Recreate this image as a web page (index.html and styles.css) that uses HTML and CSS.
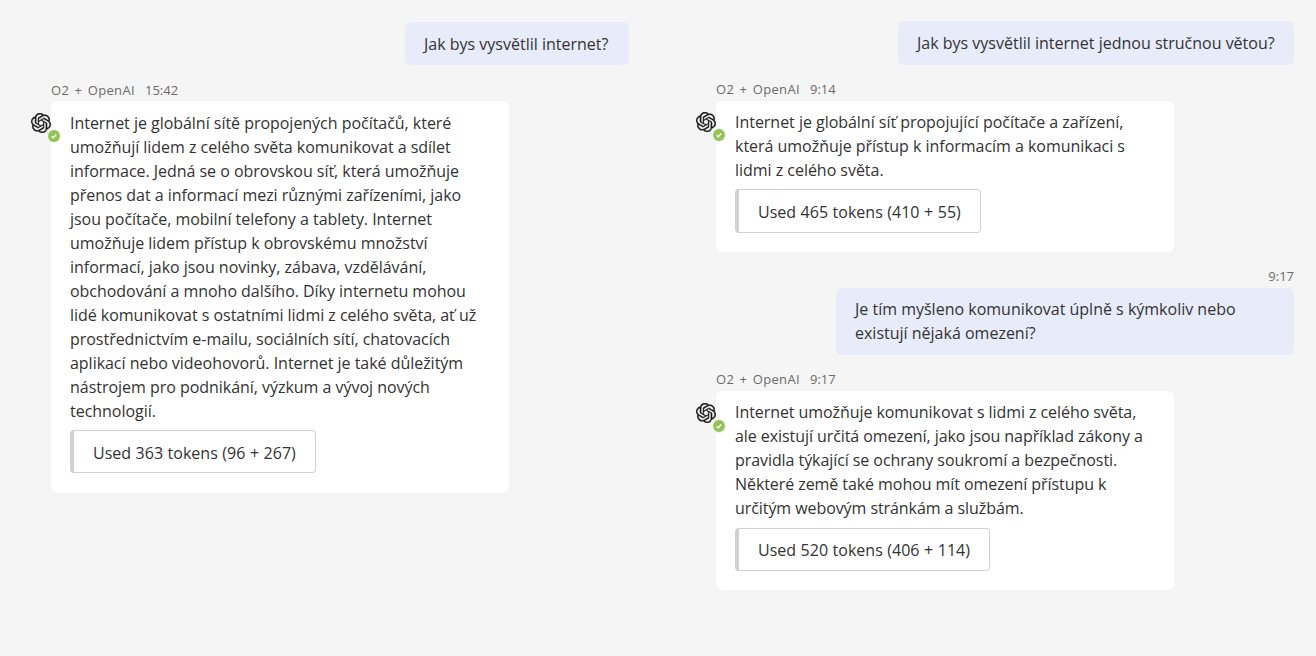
FILE: index.html
```html
<!DOCTYPE html>
<html lang="cs">

<head>
    <meta charset="UTF-8">
    <meta name="viewport" content="width=device-width, initial-scale=1.0">
    <title>O2 + OpenAI</title>
    <link rel="stylesheet" href="styles.css">
</head>

<body>
    <svg class="sprite" width="0" height="0">
        <symbol id="logo" viewBox="0 0 24 24">
            <path d="M22.2819 9.8211a5.9847 5.9847 0 0 0-.5157-4.9108 6.0462 6.0462 0 0 0-6.5098-2.9A6.0651 6.0651 0 0 0 4.9807 4.1818a5.9847 5.9847 0 0 0-3.9977 2.9 6.0462 6.0462 0 0 0 .7427 7.0966 5.98 5.98 0 0 0 .511 4.9107 6.051 6.051 0 0 0 6.5146 2.9001A5.9847 5.9847 0 0 0 13.2599 24a6.0557 6.0557 0 0 0 5.7718-4.2058 5.9894 5.9894 0 0 0 3.9977-2.9001 6.0557 6.0557 0 0 0-.7475-7.073zm-9.022 12.6081a4.4755 4.4755 0 0 1-2.8764-1.0408l.1419-.0804 4.7783-2.7582a.7948.7948 0 0 0 .3927-.6813v-6.7369l2.02 1.1686a.071.071 0 0 1 .038.052v5.5826a4.504 4.504 0 0 1-4.4945 4.4944zm-9.6607-4.1254a4.4708 4.4708 0 0 1-.5346-3.0137l.142.0852 4.783 2.7582a.7712.7712 0 0 0 .7806 0l5.8428-3.3685v2.3324a.0804.0804 0 0 1-.0332.0615L9.74 19.9502a4.4992 4.4992 0 0 1-6.1408-1.6464zM2.3408 7.8956a4.485 4.485 0 0 1 2.3655-1.9728V11.6a.7664.7664 0 0 0 .3879.6765l5.8144 3.3543-2.0201 1.1685a.0757.0757 0 0 1-.071 0l-4.8303-2.7865A4.504 4.504 0 0 1 2.3408 7.872zm16.5963 3.8558L13.1038 8.364 15.1192 7.2a.0757.0757 0 0 1 .071 0l4.8303 2.7913a4.4944 4.4944 0 0 1-.6765 8.1042v-5.6772a.79.79 0 0 0-.407-.667zm2.0107-3.0231l-.142-.0852-4.7735-2.7818a.7759.7759 0 0 0-.7854 0L9.409 9.2297V6.8974a.0662.0662 0 0 1 .0284-.0615l4.8303-2.7866a4.4992 4.4992 0 0 1 6.6802 4.66zM8.3065 12.863l-2.02-1.1638a.0804.0804 0 0 1-.038-.0567V6.0742a4.4992 4.4992 0 0 1 7.3757-3.4537l-.142.0805L8.704 5.459a.7948.7948 0 0 0-.3927.6813zm1.0976-2.3654l2.602-1.4998 2.6069 1.4998v2.9994l-2.5974 1.4997-2.6067-1.4997Z"/>
        </symbol>
        <symbol id="status" viewBox="0 0 14 14">
            <circle cx="7" cy="7" r="7" fill="#f0f0f0"/>
            <circle cx="7" cy="7" r="5.9" fill="#92c353"/>
            <path d="M4.6 7.3l1.6 1.4 3.1-3.1" fill="none" stroke="#fff" stroke-width="1.4"/>
        </symbol>
    </svg>

    <main class="page">
        <section class="chat chat-left">
            <div class="bubble question-short"><span>Jak bys vysvětlil internet?</span></div>

            <article class="message">
                <div class="meta"><span class="sender">O2 + OpenAI</span><time>15:42</time></div>
                <div class="card">
                    <div class="avatar">
                        <svg class="logo"><use href="#logo"/></svg>
                        <svg class="status"><use href="#status"/></svg>
                    </div>
                    <p>Internet je globální sítě propojených počítačů, které<br>
                        umožňují lidem z celého světa komunikovat a sdílet<br>
                        informace. Jedná se o obrovskou síť, která umožňuje<br>
                        přenos dat a informací mezi různými zařízeními, jako<br>
                        jsou počítače, mobilní telefony a tablety. Internet<br>
                        umožňuje lidem přístup k obrovskému množství<br>
                        informací, jako jsou novinky, zábava, vzdělávání,<br>
                        obchodování a mnoho dalšího. Díky internetu mohou<br>
                        lidé komunikovat s ostatními lidmi z celého světa, ať už<br>
                        prostřednictvím e-mailu, sociálních sítí, chatovacích<br>
                        aplikací nebo videohovorů. Internet je také důležitým<br>
                        nástrojem pro podnikání, výzkum a vývoj nových<br>
                        technologií.</p>
                    <div class="tokens">Used 363 tokens (96 + 267)</div>
                </div>
            </article>
        </section>

        <section class="chat chat-right">
            <div class="bubble question-long"><span>Jak bys vysvětlil internet jednou stručnou větou?</span></div>

            <article class="message">
                <div class="meta"><span class="sender">O2 + OpenAI</span><time>9:14</time></div>
                <div class="card">
                    <div class="avatar">
                        <svg class="logo"><use href="#logo"/></svg>
                        <svg class="status"><use href="#status"/></svg>
                    </div>
                    <p>Internet je globální síť propojující počítače a zařízení,<br>
                        která umožňuje přístup k informacím a komunikaci s<br>
                        lidmi z celého světa.</p>
                    <div class="tokens">Used 465 tokens (410 + 55)</div>
                </div>
            </article>

            <div class="sent-time">9:17</div>
            <div class="bubble question-wide"><span>Je tím myšleno komunikovat úplně s kýmkoliv nebo<br>
                    existují nějaká omezení?</span></div>

            <article class="message">
                <div class="meta"><span class="sender">O2 + OpenAI</span><time>9:17</time></div>
                <div class="card">
                    <div class="avatar avatar-low">
                        <svg class="logo"><use href="#logo"/></svg>
                        <svg class="status"><use href="#status"/></svg>
                    </div>
                    <p class="tight">Internet umožňuje komunikovat s lidmi z celého světa,<br>
                        ale existují určitá omezení, jako jsou například zákony a<br>
                        pravidla týkající se ochrany soukromí a bezpečnosti.<br>
                        Některé země také mohou mít omezení přístupu k<br>
                        určitým webovým stránkám a službám.</p>
                    <div class="tokens tokens-wide">Used 520 tokens (406 + 114)</div>
                </div>
            </article>
        </section>
    </main>
</body>

</html>
```
FILE: styles.css
```css
* {
    box-sizing: border-box;
}

body {
    margin: 0;
    background-color: #f5f5f5;
    color: #333;
    font-family: "Segoe UI", "Open Sans", "Noto Sans", sans-serif;
    font-size: 16px;
    line-height: 24px;
    white-space: nowrap;
}

.sprite {
    position: absolute;
}

.page {
    display: grid;
    grid-template-columns: 629px 665px;
    height: 656px;
    overflow: hidden;
}

.chat {
    display: flex;
    flex-direction: column;
}

.chat-left {
    padding: 22px 0 0 51px;
}

.chat-right {
    padding: 21px 0 0 87px;
}

.bubble {
    align-self: flex-end;
    background-color: #e8ebfa;
    border-radius: 6px;
    padding: 10px 19px 9px;
}

.question-short {
    width: 224px;
    height: 43px;
}

.question-long {
    width: 396px;
    height: 44px;
}

.question-wide {
    width: 458px;
    height: 67px;
    padding-top: 9px;
}

.message {
    width: 458px;
    margin-top: 15px;
}

.chat-right .message {
    margin-top: 14px;
}

.meta {
    display: flex;
    gap: 10px;
    height: 21px;
    line-height: 20px;
    font-size: 13px;
    color: #6b6b6b;
}

.sender {
    letter-spacing: 0.35px;
    word-spacing: 1.6px;
}

.chat-right .meta {
    height: 22px;
}

.card {
    position: relative;
    background-color: #fff;
    border-radius: 6px;
    padding: 10px 19px 20px;
}

.chat-right .card {
    padding: 9px 19px 19px;
}

.card p {
    margin: 0 0 7px;
    letter-spacing: -0.03px;
}

.card .tight {
    letter-spacing: -0.07px;
}

/* hangs over the left edge of the card */
.avatar {
    position: absolute;
    left: -20px;
    top: 12px;
    width: 30px;
    height: 30px;
}

.chat-right .avatar {
    top: 11px;
}

.chat-right .avatar-low {
    top: 12px;
}

.logo {
    display: block;
    width: 20px;
    height: 20px;
    fill: #1a1a1a;
    stroke: #1a1a1a;
    stroke-width: 0.35;
    overflow: visible;
}

.status {
    position: absolute;
    left: 16px;
    top: 16px;
    width: 14px;
    height: 14px;
}

.tokens {
    width: 246px;
    height: 43px;
    padding: 10px 0 0 19px;
    border: 1px solid #d1d1d1;
    border-left-width: 4px;
    border-radius: 4px;
    word-spacing: 0.4px;
}

.chat-right .tokens {
    height: 44px;
}

.chat-right .tokens-wide {
    width: 255px;
    height: 43px;
    margin-top: 8px;
    padding-top: 9px;
}

.sent-time {
    margin-top: 14px;
    height: 22px;
    line-height: 20px;
    font-size: 13px;
    text-align: right;
    color: #6b6b6b;
}
```
